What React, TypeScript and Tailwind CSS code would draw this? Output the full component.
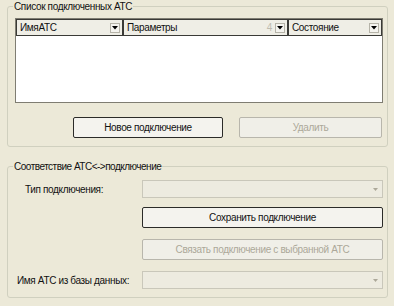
import React from "react";

// маленький выпадающий треугольник в заголовке списка
function HeaderDrop() {
  return (
    <span className="w-[10px] h-[10px] bg-[#F4F3EE] border border-[#B5B3A8] flex items-center justify-center">
      <svg width="6" height="4" viewBox="0 0 6 4">
        <path d="M0 0 H6 L3 3.5 Z" fill="#000" />
      </svg>
    </span>
  );
}

function Combo({ className = "" }: { className?: string }) {
  return (
    <div className={`h-[18px] border border-[#C9C7BA] bg-[#EDEBE0] flex items-center justify-end pr-[4px] ${className}`}>
      <svg width="5" height="3" viewBox="0 0 5 3">
        <path d="M0 0 H5 L2.5 3 Z" fill="#ACA899" />
      </svg>
    </div>
  );
}

function Btn({ label, disabled, className = "" }: { label: string; disabled?: boolean; className?: string }) {
  return (
    <div
      className={
        "h-[21px] flex items-center justify-center rounded-[2px] border whitespace-nowrap " +
        (disabled
          ? "border-[#B8B6AC] bg-[#F0EFE8] text-[#ACA899] "
          : "border-[#2B2B28] bg-[#F4F3EE] text-[#111] ") +
        className
      }
    >
      {label}
    </div>
  );
}

export default function App() {
  const columns = [
    { name: "ИмяАТС", w: "w-[107px]", mark: false },
    { name: "Параметры", w: "w-[165px]", mark: true },
    { name: "Состояние", w: "w-[94px]", mark: false },
  ];

  return (
    <div className="w-[394px] h-[306px] bg-[#ECE9D8] text-[10px] tracking-[-0.35px] leading-[13px] text-[#111] font-['Liberation_Sans',Arial,sans-serif] pl-[7px] overflow-hidden">
      <fieldset className="w-[381px] h-[147px] border border-[#D0D0BF] rounded-[3px] px-0">
        <legend className="ml-[5px] px-[1px] whitespace-nowrap">Список подключенных АТС</legend>
        <div className="pl-[7px] pt-[5px]">
          <div className="w-[368px] h-[85px] border border-[#7F7D72] bg-white">
            <div className="flex h-[17px] bg-[#EFEEE6]">
              {columns.map((c) => (
                <div key={c.name} className={`${c.w} flex items-center border border-[#3A3A36] pl-[3px] pr-[2px]`}>
                  <span className="flex-1">{c.name}</span>
                  {c.mark && <span className="text-[#BDBBB0] mr-[3px]">4</span>}
                  <HeaderDrop />
                </div>
              ))}
            </div>
          </div>
          <div className="flex mt-[14px] gap-[16px] pl-[58px]">
            <Btn label="Новое подключение" className="w-[150px]" />
            <Btn label="Удалить" disabled className="w-[143px]" />
          </div>
        </div>
      </fieldset>

      <fieldset className="w-[381px] h-[138px] mt-[13px] border border-[#D0D0BF] rounded-[3px] px-0">
        <legend className="ml-[5px] px-[1px] whitespace-nowrap tracking-[-0.5px]">Соответствие АТС&lt;-&gt;подключение</legend>
        <div className="pt-[7px] pl-[8px] flex flex-col">
          <div className="flex items-center">
            <span className="w-[126px] pl-[9px] whitespace-nowrap">Тип подключения:</span>
            <Combo className="w-[241px]" />
          </div>
          <div className="pl-[126px] mt-[9px]">
            <Btn label="Сохранить подключение" className="w-[241px]" />
          </div>
          <div className="pl-[126px] mt-[11px]">
            <Btn label="Связать подключение с выбранной АТС" disabled className="w-[241px]" />
          </div>
          <div className="flex items-center mt-[11px]">
            <span className="w-[126px] pl-[1px] whitespace-nowrap">Имя АТС из базы данных:</span>
            <Combo className="w-[241px]" />
          </div>
        </div>
      </fieldset>
    </div>
  );
}
